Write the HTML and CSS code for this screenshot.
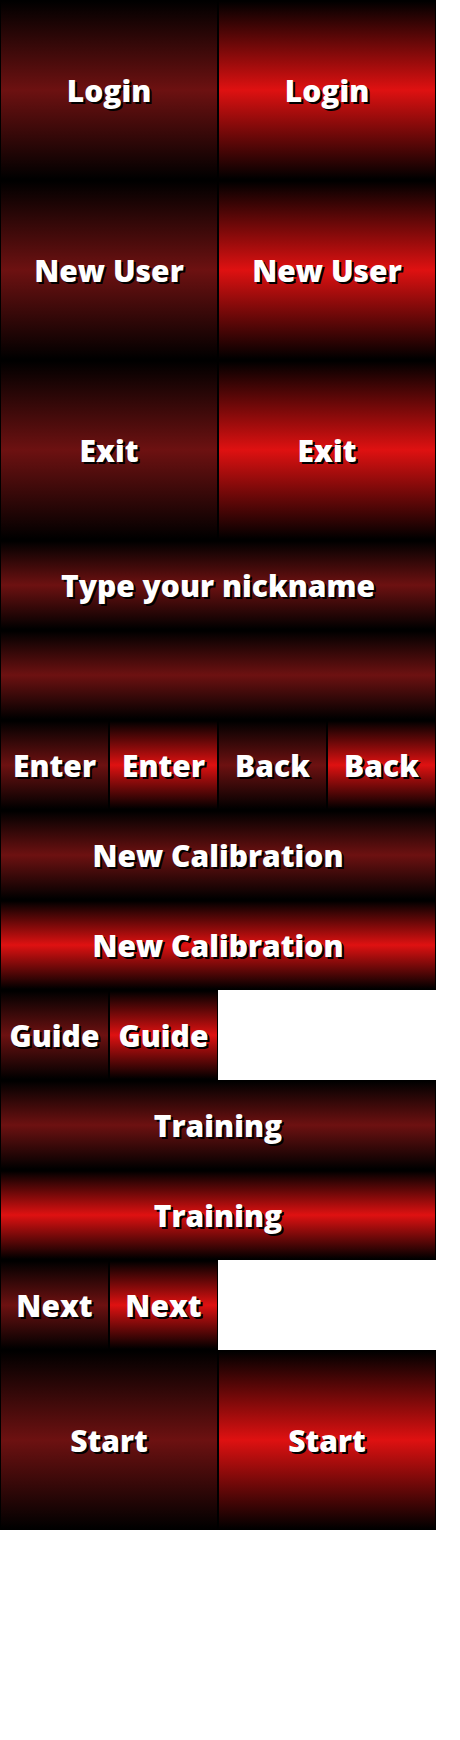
FILE: index.html
```html
<!DOCTYPE html>
<html>
<head>
<meta charset="utf-8">
<link rel="stylesheet" href="styles.css">
</head>
<body>
<div class="panel">
  <div class="row">
    <div class="btn half tall dark">Login</div>
    <div class="btn half tall bright">Login</div>
  </div>
  <div class="row">
    <div class="btn half tall dark">New User</div>
    <div class="btn half tall bright">New User</div>
  </div>
  <div class="row">
    <div class="btn half tall dark">Exit</div>
    <div class="btn half tall bright">Exit</div>
  </div>
  <div class="row">
    <div class="btn full short dark">Type your nickname</div>
  </div>
  <div class="row">
    <div class="btn full short dark"></div>
  </div>
  <div class="row">
    <div class="btn quarter short dark">Enter</div>
    <div class="btn quarter short bright">Enter</div>
    <div class="btn quarter short dark">Back</div>
    <div class="btn quarter short bright">Back</div>
  </div>
  <div class="row">
    <div class="btn full short dark">New Calibration</div>
  </div>
  <div class="row">
    <div class="btn full short bright">New Calibration</div>
  </div>
  <div class="row">
    <div class="btn quarter short dark">Guide</div>
    <div class="btn quarter short bright">Guide</div>
  </div>
  <div class="row">
    <div class="btn full short dark">Training</div>
  </div>
  <div class="row">
    <div class="btn full short bright">Training</div>
  </div>
  <div class="row">
    <div class="btn quarter short dark">Next</div>
    <div class="btn quarter short bright">Next</div>
  </div>
  <div class="row">
    <div class="btn half tall dark">Start</div>
    <div class="btn half tall bright">Start</div>
  </div>
</div>
</body>
</html>
```
FILE: styles.css
```css
html, body {
  margin: 0;
  padding: 0;
  background: #ffffff;
}

.panel {
  width: 436px;
}

.row {
  display: flex;
}

.btn {
  box-sizing: border-box;
  border: 1px solid #000;
  display: flex;
  align-items: center;
  justify-content: center;
  color: #ffffff;
  font-family: "Open Sans", "DejaVu Sans", sans-serif;
  font-weight: 800;
  font-size: 30px;
  white-space: nowrap;
  text-shadow: 2px 2px 0 #000;
}

.half { width: 218px; }
.quarter { width: 109px; }
.full { width: 436px; }

.tall { height: 180px; }
.short { height: 90px; }

.dark {
  background: linear-gradient(to bottom, #000000 0%, #6d1111 50%, #000000 100%);
}

.bright {
  background: linear-gradient(to bottom, #000000 0%, #df1111 50%, #000000 100%);
}
```
